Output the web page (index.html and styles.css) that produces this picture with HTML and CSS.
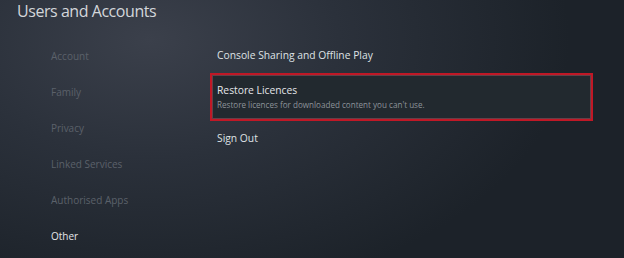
FILE: index.html
```html
<!DOCTYPE html>
<html lang="en">
<head>
<meta charset="utf-8">
<link rel="stylesheet" href="styles.css">
</head>
<body>
<div class="screen">
  <header class="header"><h1 class="title">Users and Accounts</h1></header>
  <main class="main">
    <nav class="sidebar">
      <div class="nav-item">Account</div>
      <div class="nav-item">Family</div>
      <div class="nav-item">Privacy</div>
      <div class="nav-item">Linked Services</div>
      <div class="nav-item">Authorised Apps</div>
      <div class="nav-item active">Other</div>
    </nav>
    <section class="content">
      <div class="row">Console Sharing and Offline Play</div>
      <div class="row focused">
        <div class="row-title">Restore Licences</div>
        <div class="row-sub">Restore licences for downloaded content you can't use.</div>
      </div>
      <div class="row">Sign Out</div>
    </section>
  </main>
</div>
</body>
</html>
```
FILE: styles.css
```css
html, body {
  margin: 0;
  padding: 0;
}
body {
  width: 624px;
  height: 258px;
  overflow: hidden;
  font-family: "Open Sans", "Noto Sans", sans-serif;
}
.screen {
  width: 624px;
  height: 258px;
  background:
    radial-gradient(ellipse 420px 260px at 150px 40px, #3b404b 0%, #2b313b 45%, #1c2229 100%);
  background-color: #1c2229;
}
.header {
  height: 37px;
  padding-left: 17px;
  box-sizing: border-box;
}
.title {
  margin: 0;
  font-weight: 400;
  font-size: 16px;
  letter-spacing: -0.45px;
  line-height: 23px;
  color: #d3d6da;
}
.main {
  display: flex;
}
.sidebar {
  width: 166px;
  padding-left: 51px;
  padding-top: 1px;
  display: flex;
  flex-direction: column;
}
.nav-item {
  height: 36px;
  display: flex;
  align-items: center;
  font-size: 10px;
  color: #5b616a;
}
.nav-item.active {
  color: #e4e6e9;
}
.content {
  display: flex;
  flex-direction: column;
  margin-left: -7px;
  width: 383px;
}
.row {
  height: 36px;
  display: flex;
  align-items: center;
  padding-left: 7px;
  font-size: 10.3px;
  color: #dfe2e5;
}
.row:last-child {
  height: 34px;
}
.row.focused {
  height: 48px;
  box-sizing: border-box;
  flex-direction: column;
  align-items: flex-start;
  justify-content: center;
  padding-left: 5px;
  padding-top: 1px;
  border: 2px solid #c01826;
  box-shadow: inset 0 0 0 1px rgba(220, 110, 120, 0.35);
  background: #22292f;
}
.row-title {
  font-size: 10.3px;
  line-height: 15px;
  color: #e4e6e9;
}
.row-sub {
  font-size: 8.1px;
  line-height: 14px;
  color: #8d939a;
}
```
